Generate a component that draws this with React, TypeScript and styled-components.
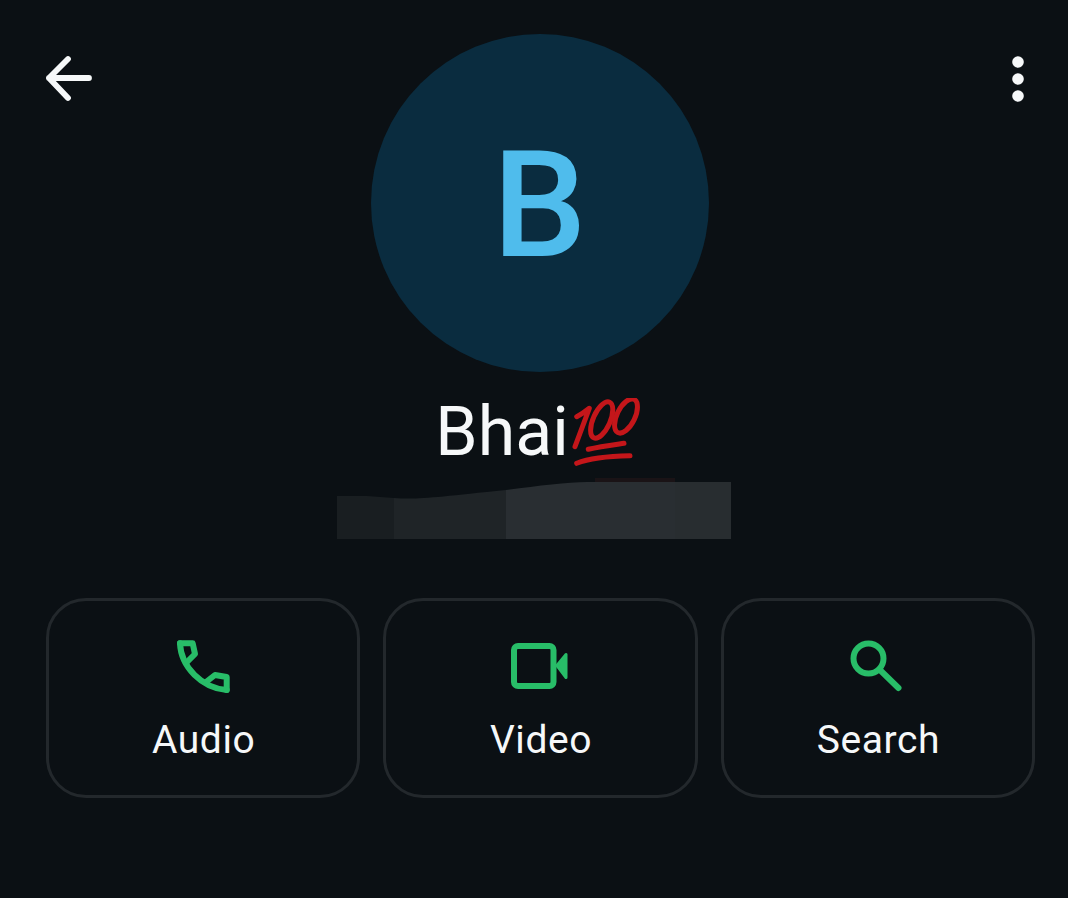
import styled, { createGlobalStyle } from "styled-components"

const GREEN = "#28bd68"
const WHITE = "#f6f8f9"
const RED = "#c4161a"

const GlobalStyle = createGlobalStyle`
    html, body {
        margin: 0;
        background: #0b1014;
        font-family: Roboto, "Liberation Sans", sans-serif;
    }
`

const Page = styled.div`
    width: 1068px;
    height: 898px;
    box-sizing: border-box;
    padding: 34px 33px 0 46px;
    display: flex;
    flex-direction: column;
    align-items: center;
    background: #0b1014;
    overflow: hidden;
`

const TopRow = styled.div`
    width: 100%;
    display: grid;
    grid-template-columns: 1fr auto 1fr;
`

const BackIcon = styled.svg`
    width: 48px;
    height: 48px;
    margin-top: 21px;
`

const MoreIcon = styled.svg`
    width: 16px;
    height: 48px;
    margin-top: 21px;
    margin-right: 9px;
    justify-self: end;
`

const Avatar = styled.div`
    width: 338px;
    height: 338px;
    box-sizing: border-box;
    margin: 0 1px 0 -1px;
    padding-top: 4px;
    border-radius: 50%;
    background: #0a2c3f;
    color: #4fbcec;
    display: flex;
    align-items: center;
    justify-content: center;
    font-size: 149px;
    font-weight: 500;
    line-height: 1;
`

const NameRow = styled.div`
    margin-top: 26px;
    margin-right: 5px;
    height: 79px;
    display: flex;
    align-items: flex-start;
    color: ${WHITE};
    font-size: 68px;
    line-height: 68px;
`

const Emoji = styled.svg`
    width: 74px;
    height: 72px;
    margin-right: -2px;
`

const Redacted = styled.svg`
    width: 394px;
    height: 62px;
    margin-right: 14px;
    flex: none;
`

const Actions = styled.div`
    width: 100%;
    margin-top: 59px;
    display: grid;
    grid-template-columns: repeat(3, 1fr);
    gap: 23px;
`

const ActionButton = styled.div`
    height: 200px;
    box-sizing: border-box;
    border: 3px solid #23282c;
    border-radius: 40px;
    padding-top: 38px;
    display: flex;
    flex-direction: column;
    align-items: center;
    color: ${WHITE};
`

const ActionIcon = styled.svg<{ $wide?: boolean }>`
    width: ${p => (p.$wide ? "60px" : "56px")};
    height: 54px;
    fill: none;
    stroke: ${GREEN};
    stroke-width: 6;
    stroke-linecap: round;
    stroke-linejoin: round;
`

const ActionLabel = styled.span`
    margin-top: 25px;
    margin-left: 1px;
    font-size: 39px;
    line-height: 44px;
    letter-spacing: 0.6px;
`

const App = () => {
    return (
        <>
            <GlobalStyle />
            <Page>
                <TopRow>
                    <BackIcon viewBox="0 0 48 48" fill="none" stroke={WHITE} strokeWidth="5.8" strokeLinecap="round" strokeLinejoin="round">
                        <path d="M3 23H43M22 4L3 23L22 43" />
                    </BackIcon>
                    <Avatar>B</Avatar>
                    <MoreIcon viewBox="0 0 16 48" fill={WHITE}>
                        <circle cx="8" cy="7" r="5.8" />
                        <circle cx="8" cy="24" r="5.8" />
                        <circle cx="8" cy="41" r="5.8" />
                    </MoreIcon>
                </TopRow>
                <NameRow>
                    <span>Bhai</span>
                    <Emoji viewBox="-1 0 74 72" fill="none" stroke={RED} strokeWidth="5" strokeLinecap="round" strokeLinejoin="round">
                        <path d="M5 48.7L19.3 10.3C16 13 11 16.5 6.7 18.7" />
                        <ellipse cx="31.7" cy="22" rx="8.5" ry="19.5" transform="rotate(24 31.7 22)" />
                        <ellipse cx="56" cy="18" rx="9" ry="18.5" transform="rotate(26 56 18)" />
                        <path d="M18.3 51.3C30 48.5 42 47 54 45.3" />
                        <path d="M6.7 65.3C22 59 42 58 60 57.7" />
                    </Emoji>
                </NameRow>
                <Redacted viewBox="0 0 394 62">
                    <path d="M258 5H338V1H258Z" fill="#1a1316" />
                    <path d="M0 19L30 19L57 21V62H0Z" fill="#191e21" />
                    <path d="M57 21C80 23 100 20 169 13V62H57Z" fill="#1f2427" />
                    <path d="M169 13C200 9 230 5 250 5H338V62H169Z" fill="#292e32" />
                    <path d="M338 5H394V62H338Z" fill="#282d30" />
                </Redacted>
                <Actions>
                    <ActionButton>
                        <ActionIcon viewBox="0 0 56 54">
                            <path d="M5 4.3C6 28 27 49 51.7 51" />
                            <path d="M5 4.3H17.7L20 15L11 24" />
                            <path d="M31 43L40 36L51.7 38V51" />
                        </ActionIcon>
                        <ActionLabel>Audio</ActionLabel>
                    </ActionButton>
                    <ActionButton>
                        <ActionIcon $wide viewBox="0 0 60 54">
                            <rect x="4" y="7" width="39.5" height="40" rx="4" />
                            <path d="M47 26.5L56 15.5V38.5Z" fill={GREEN} strokeWidth="3" />
                        </ActionIcon>
                        <ActionLabel>Video</ActionLabel>
                    </ActionButton>
                    <ActionButton>
                        <ActionIcon viewBox="0 0 56 54">
                            <circle cx="18.5" cy="19.5" r="15" />
                            <path d="M30 31L48.5 49" />
                        </ActionIcon>
                        <ActionLabel>Search</ActionLabel>
                    </ActionButton>
                </Actions>
            </Page>
        </>
    )
}

export default App
